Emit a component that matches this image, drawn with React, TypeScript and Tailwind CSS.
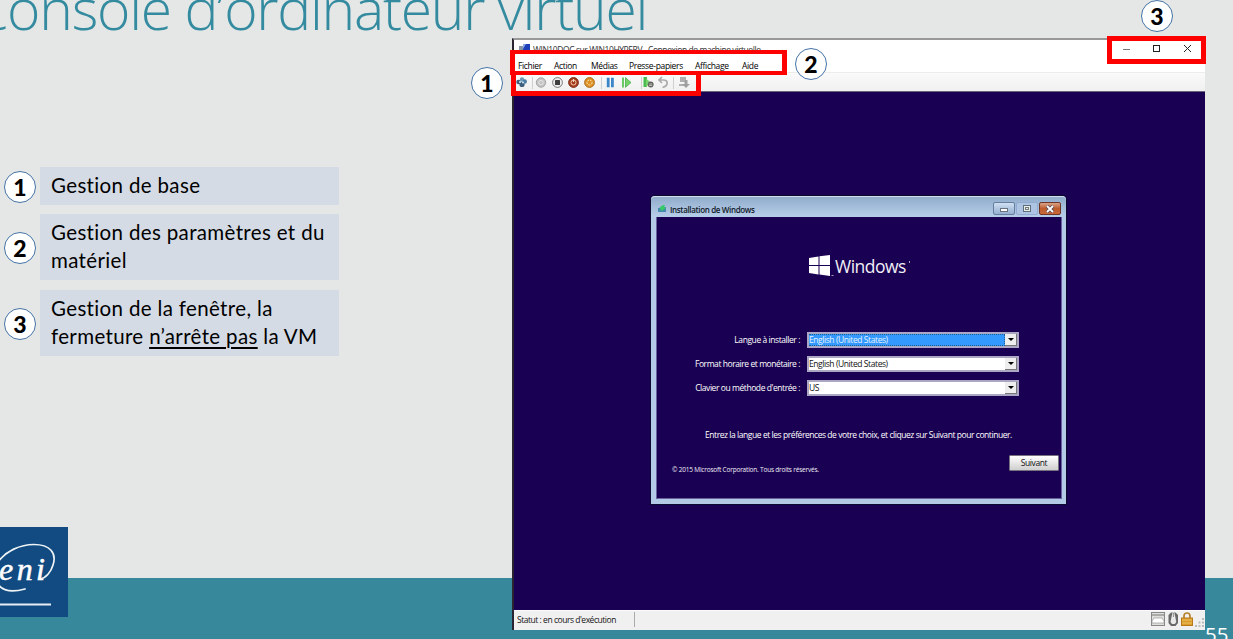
import type { ReactNode } from 'react';

const ui = "font-['Open_Sans','Noto_Sans',sans-serif]";

function Badge({ n, className = '' }: { n: number; className?: string }) {
  return (
    <span
      className={`flex size-8 shrink-0 items-center justify-center rounded-full border-[1.5px] border-[#4573a7] bg-white font-['Lato','Open_Sans',sans-serif] text-[23px] leading-none font-black text-black ${className}`}
    >
      {n}
    </span>
  );
}

function LegendRow({ n, children, className = '' }: { n: number; children: ReactNode; className?: string }) {
  return (
    <div className={`flex items-center ${className}`}>
      <Badge n={n} className="relative top-px mr-1" />
      <div className="w-[299px] bg-[#d5dbe5] pt-1 pb-[6px] pl-[11px] font-['Lato',sans-serif] text-[20.5px] leading-[28px] tracking-[0.35px] whitespace-nowrap text-black">
        {children}
      </div>
    </div>
  );
}

function EniLogo() {
  return (
    <svg className="block h-[90px] w-[68px]" viewBox="0 0 68 90">
      <rect width="68" height="90" fill="#124b81" />
      <g fill="none" stroke="#eef3f5" strokeLinecap="round">
        <path d="M-2 35C6 24 20 17.500 34 17.500C50 17.500 57 26 53 38C51 45 46 51 40 52" strokeWidth="1.700" />
        <path d="M-2 57C3 65 14 65 25 62" strokeWidth="1.800" />
      </g>
      <text x="-1" y="52.500" fill="#fff" stroke="#fff" strokeWidth=".5" fontFamily="Liberation Serif, serif" fontStyle="italic" fontSize="32" textLength="46">
        eni
      </text>
      <rect y="76.500" width="51" height="2" fill="#e8eef4" />
    </svg>
  );
}

function VmIcon() {
  return (
    <svg className="h-3 w-3" viewBox="0 0 12 12">
      <rect x="0" y="3" width="4" height="4" fill="#8794a5" />
      <rect x="4" y="1" width="7" height="6" fill="#1d3fb8" />
      <path d="M4 1h3l-3 5z" fill="#8aa8e8" />
      <path d="M2 8h8v2H2z" fill="#5d6c80" />
    </svg>
  );
}

function Toolbar() {
  return (
    <svg className="block h-[19px] w-[190px]" viewBox="0 0 190 19">
      <g fill="#3b5f7d">
        <circle cx="4.500" cy="9" r="2.200" />
        <circle cx="8" cy="6.500" r="2.200" fill="#6d9bb8" />
        <circle cx="8" cy="11.500" r="2.600" />
        <circle cx="10.800" cy="8.500" r="2.200" fill="#4c7fa5" />
        <circle cx="6" cy="9" r=".9" fill="#d8edf5" />
        <circle cx="9" cy="9.500" r=".9" fill="#d8edf5" />
      </g>
      <path d="M18.500 4v12M87.500 4v12M127.500 4v12M159.500 4v12" stroke="#cfcfcf" />
      <circle cx="27" cy="9.500" r="4.700" fill="#c4c4c4" stroke="#a5a5a5" />
      <circle cx="27" cy="9.500" r="2.200" fill="none" stroke="#e4e4e4" />
      <circle cx="43.500" cy="9.500" r="4.900" fill="#eee" stroke="#777" />
      <rect x="41" y="7" width="5" height="5" rx=".5" fill="#3e3e3e" />
      <circle cx="59.500" cy="9.500" r="4.900" fill="#a63c1c" stroke="#7a2d18" />
      <circle cx="59.500" cy="9.500" r="2.500" fill="none" stroke="#f0cbb0" />
      <path d="M59.500 6v3" stroke="#f5ddca" />
      <circle cx="75.500" cy="9.500" r="4.900" fill="#dd8f24" stroke="#ac6d1c" />
      <circle cx="75.500" cy="9.500" r="2.500" fill="none" stroke="#fff0bd" strokeDasharray="2 1" />
      <path d="M92.800 4.800h2.800v9.500h-2.800zM97 4.800h2.800v9.500H97z" fill="#3b85c9" />
      <path d="M108 4.500h2v10h-2z" fill="#69c965" />
      <path d="M111.500 4.700l5.500 4.800-5.500 4.800z" fill="#74d26b" stroke="#48ac49" strokeWidth=".8" />
      <path d="M129.500 4h3.500v10h-3.500z" fill="#4bbb50" />
      <path d="M132 5.500l5 4-5 4.500z" fill="#78d46f" />
      <circle cx="136.700" cy="11.500" r="2.900" fill="#64645e" />
      <path d="M135.200 11h3M135.200 12.500h3" stroke="#ddd" strokeWidth=".7" />
      <path d="M148 4l-3 3 3 3M145.500 7h4c5 0 5 6-1 7.500" fill="none" stroke="#aaa" strokeWidth="1.700" />
      <path d="M166 4h6v5h-6zM165 11h6v2h-6z" fill="#b0b0b0" />
      <path d="M170.500 7v4H168l4 4 4-4h-2.500V7z" fill="#a0a0a0" />
    </svg>
  );
}

function Combo({ value, selected = false }: { value: string; selected?: boolean }) {
  return (
    <div className="flex h-4 w-[212px] border-2 border-[#aaa6c4] bg-white">
      <div
        className={`flex min-w-0 flex-1 items-center whitespace-nowrap text-[8.5px] leading-none tracking-[-0.42px] ${
          selected ? 'border border-l-0 border-dotted border-[#1d5b99] bg-[#3399ff] text-[#e5f2ff]' : 'text-[#111]'
        }`}
      >
        {value}
      </div>
      <div className="flex w-3 items-center justify-center border-r border-b border-[#777] bg-[#eee]">
        <span className="size-0 border-x-[3px] border-t-[3px] border-x-transparent border-t-black" />
      </div>
    </div>
  );
}

function Field({ label, value, selected }: { label: string; value: string; selected?: boolean }) {
  return (
    <div className="flex items-center">
      <span className="mr-[7px] w-[144px] text-right text-[8.5px] leading-none tracking-[-0.43px] whitespace-nowrap text-white">{label}</span>
      <Combo value={value} selected={selected} />
    </div>
  );
}

function Wizard() {
  return (
    <section className="ml-[137px] h-[308px] w-[415px] rounded-t-[4px] border-r-4 border-b-[5px] border-l-[5px] border-[#b3cae6] bg-[#190052] shadow-[0_0_0_1px_#0c0930,inset_0_0_0_1px_#68609c]">
      <header className="-mr-1 -ml-[5px] flex h-[21px] items-center rounded-t-[4px] border-t border-[#d1ddec] bg-linear-to-b from-[#91adcc] to-[#b7cee9] pr-[5px] pl-[7px]">
        <svg className="mt-[3px] h-[10px] w-[9px]" viewBox="0 0 9 10">
          <path d="M0 4l8-1v5H0z" fill="#438cae" />
          <path d="M2 5c0-3 2-4 5-4L6 3l2 1-4 3z" fill="#36c967" />
        </svg>
        <span className="ml-[3px] pt-[5px] text-[8px] leading-none font-semibold tracking-[-0.35px] whitespace-nowrap text-[#101828]">Installation de Windows</span>
        <div className="ml-auto flex gap-px pt-[3px]">
          <span className="flex h-[13px] w-[22px] items-center justify-center rounded-[2px] border border-[#667f9e] bg-linear-to-b from-[#d0e0f2] to-[#94b0d0]">
            <i className="mt-[2px] h-[4px] w-[8px] border border-[#687280] bg-white" />
          </span>
          <span className="flex h-[13px] w-[22px] items-center justify-center rounded-[2px] border border-[#91acd0] bg-[#adc5e2]">
            <i className="flex h-[7px] w-[8px] items-center justify-center border border-[#5f6e7c] bg-[#e9eee8]">
              <i className="h-[3px] w-[4px] border border-[#727d7d]" />
            </i>
          </span>
          <span className="flex h-[13px] w-[22px] items-center justify-center rounded-[2px] border border-[#713526] bg-linear-to-b from-[#d7a487] via-[#bd5b2c] to-[#c8683b]">
            <svg className="h-[8px] w-[10px]" viewBox="0 0 10 8">
              <path d="M2 1l6 6M8 1L2 7" stroke="#514a55" strokeWidth="3.400" />
              <path d="M2 1l6 6M8 1L2 7" stroke="#fff" strokeWidth="1.800" />
            </svg>
          </span>
        </div>
      </header>

      <div className="flex items-center pt-[37px] pl-[153px]">
        <svg className="h-[23px] w-[26px]" viewBox="0 0 26 23">
          <path d="M0 3l9.500-1.500V10H0zM10.500 1.300L21 0V10H10.500zM0 11h9.500v8.500L0 18zM10.500 11H21v10l-10.500-1.400z" fill="#fff" />
          <path d="M22.500 20.500h2" stroke="#aaa3c4" />
        </svg>
        <span className="pt-px text-[17.5px] leading-[23px] tracking-[-0.5px] text-[#f0eff6]">Windows</span>
        <span className="mb-2 ml-[3px] size-[1.5px] bg-[#aaa3c4]" />
      </div>

      <div className="mt-[54px] flex flex-col gap-2">
        <Field label="Langue à installer :" value="English (United States)" selected />
        <Field label="Format horaire et monétaire :" value="English (United States)" />
        <Field label="Clavier ou méthode d'entrée :" value="US" />
      </div>

      <p className="mt-[34px] pl-[49px] text-[8.5px] leading-[10px] tracking-[-0.44px] whitespace-nowrap text-white">
        Entrez la langue et les préférences de votre choix, et cliquez sur Suivant pour continuer.
      </p>
      <footer className="mt-[15px] flex h-[17px] pr-[3px] pl-4">
        <span className="pt-[10px] text-[6.5px] leading-[10px] tracking-[-0.2px] whitespace-nowrap text-[#f0eef6]">© 2015 Microsoft Corporation. Tous droits réservés.</span>
        <button className="ml-auto flex h-[16px] w-[50px] items-center justify-center rounded-[1px] border border-[#77727f] bg-linear-to-b from-white to-[#cfcfcf] text-[8.5px] leading-none tracking-[-0.4px] text-[#111]">
          Suivant
        </button>
      </footer>
    </section>
  );
}

function StatusBar() {
  return (
    <footer className="flex h-5 items-center border-t border-[#fafafa] bg-[#f1f0f1] pb-[2px] pl-[3px]">
      <span className="w-[117px] pt-[2px] text-[8.5px] leading-none tracking-[-0.47px] whitespace-nowrap text-[#151515]">Statut : en cours d'exécution</span>
      <span className="h-[15px] w-px bg-[#aaa]" />
      <svg className="mr-px ml-auto h-[17px] w-[53px]" viewBox="0 0 53 17">
        <rect x=".5" y="1.500" width="13" height="13" fill="#dededb" stroke="#888" />
        <path d="M1 4h12" stroke="#777" />
        <path d="M3 7h8l2 3v2H1v-2z" fill="#fff" stroke="#999" strokeWidth=".7" />
        <path d="M20 1.500h4.500L27 4v8l-2.500 3H20l-2.500-3V4z" fill="#686868" />
        <path d="M20.800 4.500l.7-3h1.800l.7 3 1.300 6.500-1.500 2h-2.800l-1.500-2z" fill="#e9e9e9" />
        <path d="M22.400 2v4" stroke="#777" strokeWidth=".8" />
        <path d="M33 8V5c0-4 6-4 6 0v3" fill="none" stroke="#b5832c" strokeWidth="1.700" />
        <rect x="30.500" y="7" width="11" height="7.500" fill="#d89b2c" stroke="#b9791b" />
        <path d="M31 9h10M31 12h10" stroke="#efc35e" />
        <path d="M44 14h2v2h-2zM47.500 14h2v2h-2zM51 14h2v2h-2zM47.500 10.500h2v2h-2zM51 10.500h2v2h-2zM51 7h2v2h-2z" fill="#bbb" />
      </svg>
    </footer>
  );
}

function VmWindow() {
  return (
    <main className={`mt-[38px] flex h-[592px] w-[693px] shrink-0 flex-col border-t-2 border-l-2 border-t-[#999] border-l-[#292332] bg-white ${ui}`}>
      <div className="flex h-[18px] items-center">
        <div className="flex items-center pl-[5px]">
          <VmIcon />
          <span className="ml-[2px] pt-[2px] text-[8.5px] leading-none tracking-[-0.42px] whitespace-nowrap text-[#333]">WIN10DOC sur WIN10HYPERV - Connexion de machine virtuelle</span>
        </div>
        <svg className="mr-3 ml-auto h-[14px] w-[74px]" viewBox="0 0 74 14" fill="none" stroke="#222">
          <path d="M4 7.500h7" stroke="#777" />
          <rect x="34.500" y="3.500" width="6" height="6" />
          <path d="M65 3l7 7M72 3l-7 7" />
        </svg>
      </div>
      <nav className="flex h-[14px] items-center pt-[3px] text-[8.5px] leading-none tracking-[-0.33px] whitespace-nowrap text-black">
        <span className="ml-1 w-9">Fichier</span>
        <span className="w-[37px]">Action</span>
        <span className="w-[38px]">Médias</span>
        <span className="w-[66px]">Presse-papiers</span>
        <span className="w-[47px]">Affichage</span>
        <span>Aide</span>
      </nav>
      <div className="h-[19px] border-t border-[#ececec] bg-linear-to-b from-[#fafafa] to-[#f0f0f0]">
        <Toolbar />
      </div>
      <div className="flex-1 border-t border-[#69657d] bg-[#190052] pt-[104px]">
        <Wizard />
      </div>
      <StatusBar />
    </main>
  );
}

export default function App() {
  return (
    <div className="relative flex h-[639px] w-[1233px] overflow-hidden bg-[linear-gradient(to_bottom,#e4e7e6_578px,#36889a_578px)]">
      <aside className="flex h-[639px] w-[512px] shrink-0 flex-col">
        <h1 className="-mt-[37px] -ml-[27px] h-[90px] font-['Open_Sans',sans-serif] text-[57px] leading-[90px] font-light tracking-[-1.25px] whitespace-nowrap text-[#348ba0]">
          Console d’ordinateur virtuel
        </h1>
        <div className="mt-[114px] flex flex-col gap-[9px] pl-1">
          <LegendRow n={1}>Gestion de base</LegendRow>
          <LegendRow n={2}>
            Gestion des paramètres et du
            <br />
            matériel
          </LegendRow>
          <LegendRow n={3} className="mt-px">
            Gestion de la fenêtre, la
            <br />
            fermeture <span className="underline decoration-[1.5px] underline-offset-[3px]">n’arrête pas</span> la VM
          </LegendRow>
        </div>
        <div className="mt-auto mb-[22px]">
          <EniLogo />
        </div>
      </aside>

      <VmWindow />

      <span className="mt-[622px] font-['Open_Sans',sans-serif] text-[20.5px] leading-6 text-white">55</span>

      <div className="absolute top-[50px] left-[510px] h-[25px] w-[277px] border-[5px] border-y-4 border-[#ff0000]" />
      <div className="absolute top-[71px] left-[511px] h-[25px] w-[190px] border-[5px] border-t-4 border-[#ff0000]" />
      <div className="absolute top-9 left-[1107px] h-7 w-[99px] border-[5px] border-[#ff0000]" />
      <Badge n={1} className="absolute top-[67px] left-[471px]" />
      <Badge n={2} className="absolute top-[48px] left-[795px]" />
      <Badge n={3} className="absolute top-0 left-[1141px]" />
    </div>
  );
}
